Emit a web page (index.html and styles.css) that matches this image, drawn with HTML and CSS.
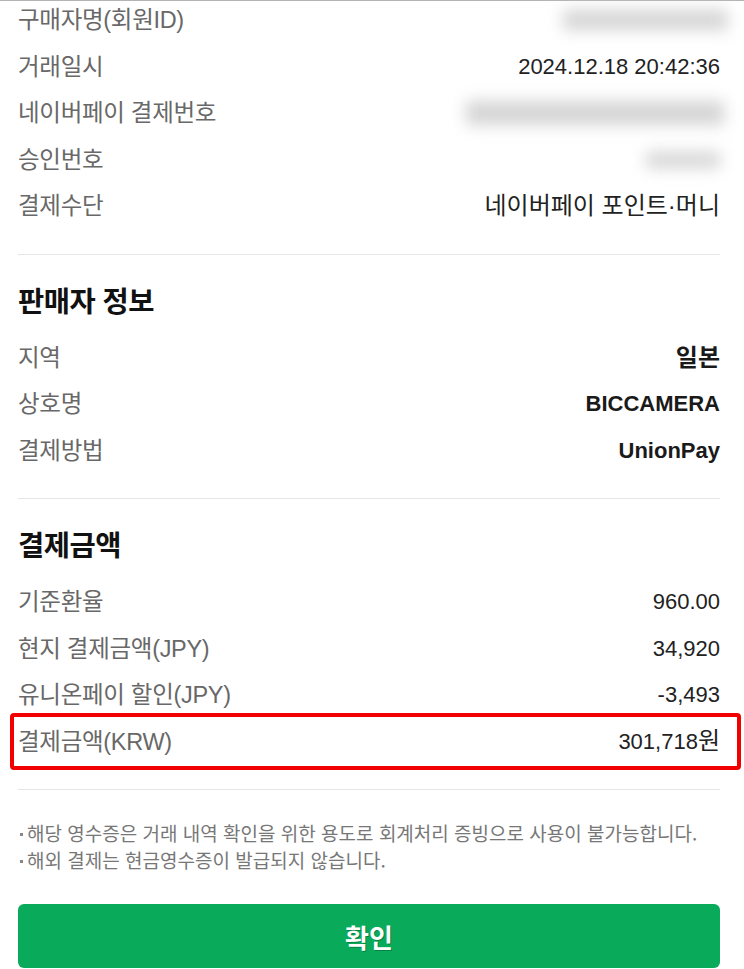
FILE: index.html
```html
<!DOCTYPE html>
<html lang="ko">
<head>
<meta charset="utf-8">
<title>결제 영수증</title>
<link rel="stylesheet" href="styles.css">
</head>
<body>
<div class="topline"></div>
<main class="page">
  <section class="section first">
    <div class="row"><span class="label">구매자명(회원ID)</span><span class="blur blur-id"></span></div>
    <div class="row"><span class="label">거래일시</span><span class="value">2024.12.18 20:42:36</span></div>
    <div class="row"><span class="label">네이버페이 결제번호</span><span class="blur blur-no"></span></div>
    <div class="row"><span class="label">승인번호</span><span class="blur blur-ap"></span></div>
    <div class="row"><span class="label">결제수단</span><span class="value ko">네이버페이 포인트·머니</span></div>
  </section>
  <section class="section">
    <h2 class="heading">판매자 정보</h2>
    <div class="row"><span class="label">지역</span><span class="value bold ko">일본</span></div>
    <div class="row"><span class="label">상호명</span><span class="value bold">BICCAMERA</span></div>
    <div class="row"><span class="label">결제방법</span><span class="value bold">UnionPay</span></div>
  </section>
  <section class="section">
    <h2 class="heading">결제금액</h2>
    <div class="row"><span class="label">기준환율</span><span class="value">960.00</span></div>
    <div class="row"><span class="label">현지 결제금액(JPY)</span><span class="value">34,920</span></div>
    <div class="row"><span class="label">유니온페이 할인(JPY)</span><span class="value">-3,493</span></div>
    <div class="row highlight"><span class="label">결제금액(KRW)</span><span class="value">301,718<span class="ko">원</span></span></div>
  </section>
  <ul class="notes">
    <li>해당 영수증은 거래 내역 확인을 위한 용도로 회계처리 증빙으로 사용이 불가능합니다.</li>
    <li>해외 결제는 현금영수증이 발급되지 않습니다.</li>
  </ul>
  <button class="confirm" type="button">확인</button>
</main>
</body>
</html>
```
FILE: styles.css
```css
html, body {
  margin: 0;
  padding: 0;
  background: #fff;
}
body {
  font-family: "Liberation Sans", "Noto Sans CJK KR", sans-serif;
  color: #222;
  overflow: hidden;
}
.topline {
  height: 1px;
  background: #b4b4b4;
}
.page {
  padding: 0 24px 0 18px;
}
.section {
  border-bottom: 1px solid #e6e6e6;
  padding: 30px 0 24px;
}
.section.first {
  padding-top: 0;
  margin-top: -4px;
}
.heading {
  margin: 0 0 16px;
  font-size: 28.5px;
  line-height: 34px;
  font-weight: 700;
  color: #111;
  letter-spacing: -0.5px;
}
.row {
  position: relative;
  display: flex;
  justify-content: space-between;
  align-items: center;
  height: 46.5px;
}
.label {
  font-size: 23.5px;
  line-height: 30px;
  color: #686868;
  letter-spacing: -0.3px;
}
.value {
  font-size: 22px;
  line-height: 30px;
  color: #222;
}
.ko {
  font-size: 24px;
}
.value.bold {
  font-weight: 700;
  color: #1a1a1a;
}
.blur {
  display: inline-block;
  background: #d4d4d4;
  filter: blur(8px);
}
.blur-id {
  width: 165px;
  height: 20px;
  margin-right: -8px;
}
.blur-no {
  width: 258px;
  height: 24px;
  margin-right: -4px;
}
.blur-ap {
  width: 74px;
  height: 16px;
  margin-right: 0;
}
.highlight::after {
  content: "";
  position: absolute;
  top: -6px;
  bottom: -5px;
  left: -8px;
  right: -21px;
  border: 4px solid #f20000;
  border-radius: 4px;
  pointer-events: none;
}
.notes {
  list-style: none;
  margin: 0;
  padding: 29px 0 0 2px;
}
.notes li {
  position: relative;
  padding-left: 7px;
  font-family: "Noto Sans CJK KR", sans-serif;
  font-size: 19px;
  line-height: 27px;
  color: #777;
}
.notes li::before {
  content: "";
  position: absolute;
  left: 0;
  top: 14px;
  width: 3px;
  height: 3px;
  background: #888;
}
.confirm {
  display: block;
  width: 100%;
  height: 64px;
  margin-top: 31px;
  border: 0;
  border-radius: 6px;
  background: #0aaa5b;
  color: #fff;
  font-family: "Noto Sans CJK KR", sans-serif;
  font-size: 26px;
  font-weight: 700;
  text-shadow: 1px 1px 0 rgba(0, 80, 30, 0.45);
  cursor: pointer;
}
```
